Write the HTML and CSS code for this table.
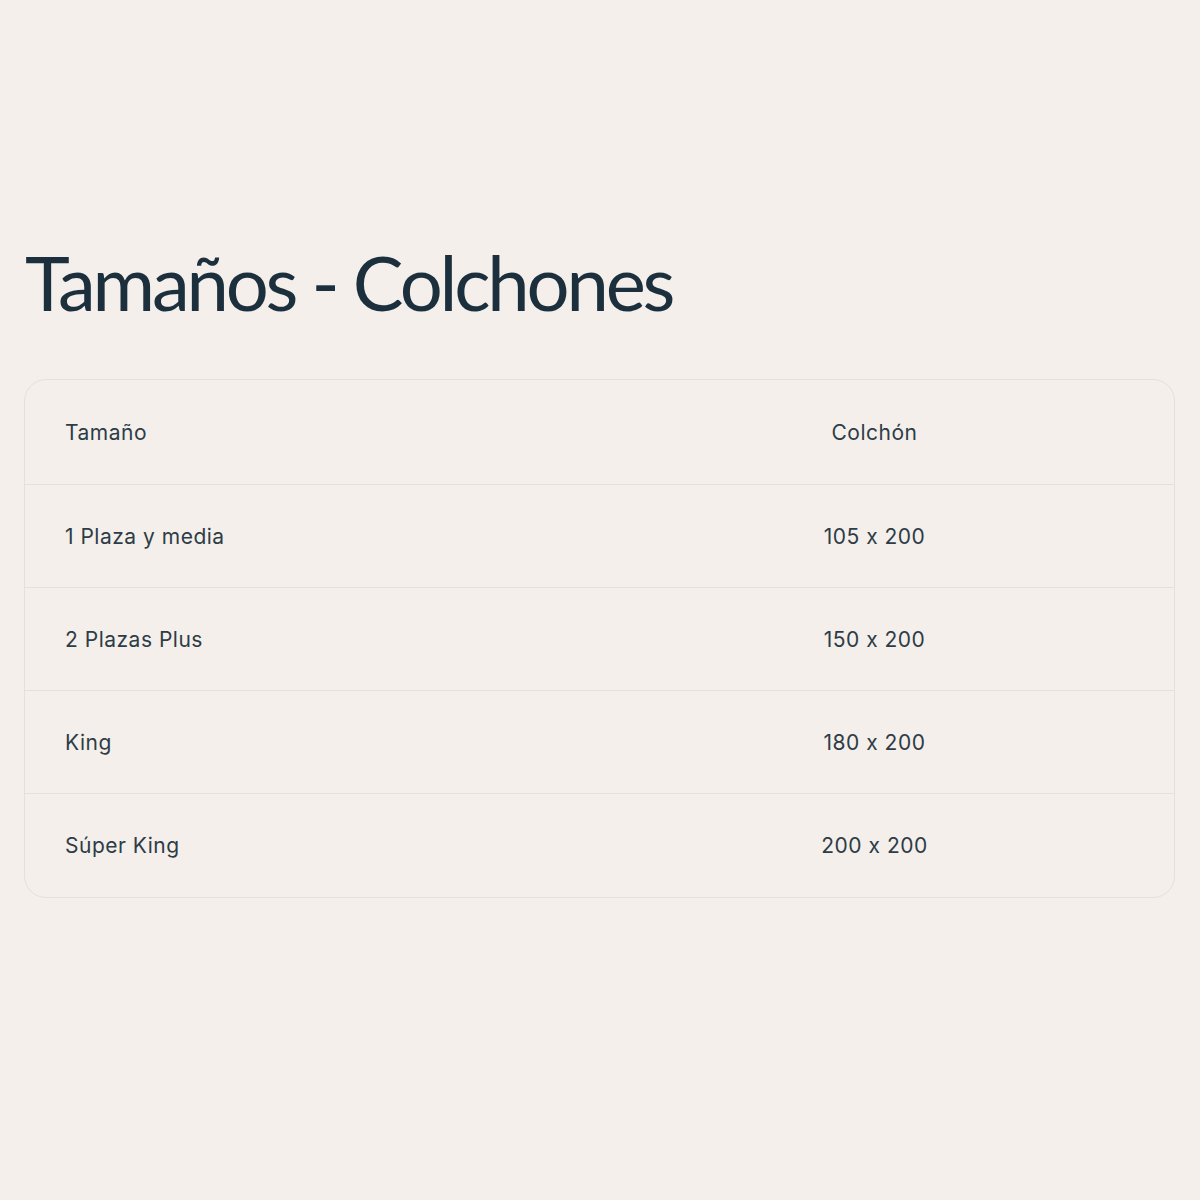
FILE: index.html
```html
<!DOCTYPE html>
<html lang="es">
<head>
<meta charset="utf-8">
<title>Tamaños - Colchones</title>
<link rel="stylesheet" href="styles.css">
</head>
<body>
<main class="page">
  <h1 class="title">Tamaños - Colchones</h1>
  <div class="table">
    <div class="row head">
      <div class="cell">Tamaño</div>
      <div class="cell c2">Colchón</div>
    </div>
    <div class="row">
      <div class="cell">1 Plaza y media</div>
      <div class="cell c2">105 x 200</div>
    </div>
    <div class="row">
      <div class="cell">2 Plazas Plus</div>
      <div class="cell c2">150 x 200</div>
    </div>
    <div class="row">
      <div class="cell">King</div>
      <div class="cell c2">180 x 200</div>
    </div>
    <div class="row last">
      <div class="cell">Súper King</div>
      <div class="cell c2">200 x 200</div>
    </div>
  </div>
</main>
</body>
</html>
```

FILE: styles.css
```css
html, body {
  margin: 0;
  padding: 0;
  background: #f4efea;
}
.page {
  width: 1200px;
  height: 1200px;
  box-sizing: border-box;
  padding: 232px 25px 0 24px;
}
.title {
  margin: 0 0 0 1px;
  font-family: "Lato", "Noto Sans", sans-serif;
  font-weight: 400;
  font-size: 76px;
  line-height: 100px;
  letter-spacing: -3.2px;
  color: #1b2f3d;
}
.table {
  margin-top: 47px;
  border: 1px solid #e6e0da;
  border-radius: 22px;
  overflow: hidden;
}
.row {
  display: grid;
  grid-template-columns: 550px 1fr;
  box-sizing: border-box;
  height: 103px;
  border-bottom: 1px solid #e6e0da;
  align-items: center;
}
.row.head {
  height: 105px;
}
.row.last {
  border-bottom: none;
}
.cell {
  padding: 0 40px;
  font-family: "Inter", "Open Sans", sans-serif;
  font-feature-settings: "calt" 0;
  font-size: 21px;
  letter-spacing: 0.5px;
  color: #2d3c47;
}
.c2 {
  text-align: center;
}
```
